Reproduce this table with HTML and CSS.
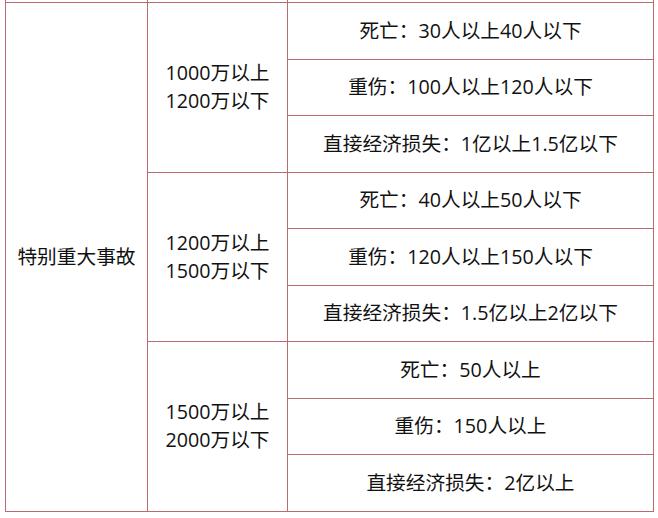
FILE: index.html
```html
<!DOCTYPE html>
<html lang="zh">
<head>
<meta charset="utf-8">
<link rel="stylesheet" href="styles.css">
</head>
<body>
<div class="wrap">
<table class="grid">
<colgroup><col class="c1"><col class="c2"><col class="c3"></colgroup>
<tr class="stub"><td></td><td></td><td></td></tr>
<tr><td rowspan="9">特别重大事故</td><td rowspan="3">1000万以上<br>1200万以下</td><td>死亡：30人以上40人以下</td></tr>
<tr><td>重伤：100人以上120人以下</td></tr>
<tr><td>直接经济损失：1亿以上1.5亿以下</td></tr>
<tr><td rowspan="3">1200万以上<br>1500万以下</td><td>死亡：40人以上50人以下</td></tr>
<tr><td>重伤：120人以上150人以下</td></tr>
<tr><td>直接经济损失：1.5亿以上2亿以下</td></tr>
<tr><td rowspan="3">1500万以上<br>2000万以下</td><td>死亡：50人以上</td></tr>
<tr><td>重伤：150人以上</td></tr>
<tr><td>直接经济损失：2亿以上</td></tr>
</table>
</div>
</body>
</html>
```
FILE: styles.css
```css
html, body {
  margin: 0;
  padding: 0;
  background: #ffffff;
}
.wrap {
  padding-left: 5px;
}
.grid {
  border-collapse: collapse;
  table-layout: fixed;
  width: 648px;
  font-family: "Open Sans", "Noto Sans CJK SC", sans-serif;
  font-size: 19.7px;
  line-height: 28px;
  color: #111111;
}
.c1 { width: 142px; }
.c2 { width: 140px; }
.c3 { width: 366px; }
.grid td {
  border: 1px solid #bb6a72;
  text-align: center;
  vertical-align: middle;
  padding: 0;
  height: 55.5px;
}
.grid .stub td {
  height: 2px;
  border-top: none;
}
```
